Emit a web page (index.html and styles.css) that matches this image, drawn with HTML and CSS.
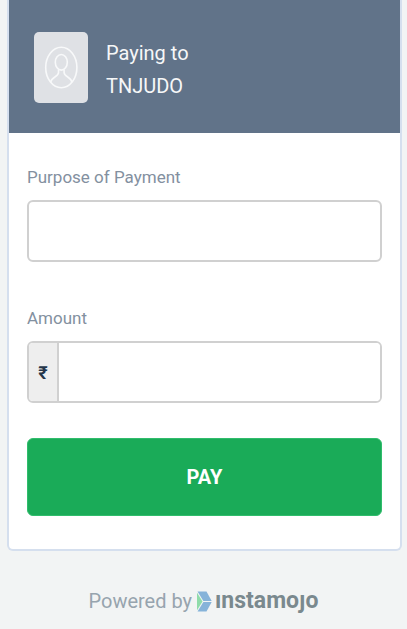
FILE: index.html
```
<!DOCTYPE html>
<html lang="en">
<head>
<meta charset="utf-8">
<meta name="viewport" content="width=device-width, initial-scale=1">
<title>Paying to TNJUDO</title>
<link rel="stylesheet" href="styles.css">
</head>
<body>
<main class="card">
  <header class="payee">
    <svg class="avatar" viewBox="0 0 54 71" aria-hidden="true">
      <rect width="54" height="71" rx="5" fill="#dfe1e5"/>
      <g fill="none" stroke="#f8f9fa" stroke-width="1.6">
        <ellipse cx="27.3" cy="35.5" rx="15.600" ry="20.2"/>
        <ellipse cx="27.3" cy="30.3" rx="6" ry="7.800"/>
        <path d="M24.500 37.500v3c0 2-1.400 3-3.300 4.200-2.300 1.500-4 2.800-4.500 5.300M30.100 37.500v3c0 2 1.400 3 3.300 4.200 2.300 1.500 4 2.800 4.500 5.300"/>
      </g>
    </svg>
    <h1 class="payee-name">Paying to<br>TNJUDO</h1>
  </header>
  <form class="form">
    <label class="label" for="purpose">Purpose of Payment</label>
    <input class="field" id="purpose" type="text">
    <label class="label" for="amount">Amount</label>
    <div class="field group">
      <span class="currency">₹</span>
      <input class="amount" id="amount" type="text" inputmode="decimal">
    </div>
    <button class="pay" type="button">PAY</button>
  </form>
</main>
<footer class="footer">
  <span>Powered by</span>
  <a class="brand" href="#">
    <svg class="mark" viewBox="0 0 15 21" aria-hidden="true">
      <path d="M0.500 0.500h9L14.700 9.900H6.400z" fill="#86b3d9"/>
      <path d="M0.500 20.500h9L14.700 11.100H6.400z" fill="#86b3d9"/>
      <path d="M0 1.800L5.500 10.500 0 19.200z" fill="#8fdcaa"/>
    </svg>
    <span>ınstamoȷo</span>
  </a>
</footer>
</body>
</html>
```
FILE: styles.css
```
* {
  box-sizing: border-box;
}

body {
  margin: 0;
  background: #f2f4f4;
  font-family: Roboto, "Liberation Sans", sans-serif;
}

.card {
  margin: 0 5px 0 7px;
  background: #fff;
  border: 2px solid #d5dfee;
  border-top: 0;
  border-radius: 0 0 6px 6px;
}

.payee {
  display: flex;
  align-items: center;
  gap: 18px;
  padding: 32px 25px 30px;
  background: #617389;
}

.avatar {
  width: 54px;
  height: 71px;
}

.payee-name {
  margin: 0;
  padding-top: 4px;
  color: #f6f7f8;
  font-size: 20px;
  font-weight: 400;
  line-height: 33px;
}

.form {
  display: flex;
  flex-direction: column;
  padding: 32px 18px 33px;
}

.label {
  margin-bottom: 11px;
  color: #8390a0;
  font-size: 17px;
  line-height: 24px;
}

.field {
  width: 100%;
  height: 62px;
  margin: 0 0 44px;
  padding: 0 12px;
  border: 2px solid #d0d0d0;
  border-radius: 6px;
  background: #fff;
  color: #25364a;
  font: inherit;
  font-size: 18px;
}

.group {
  display: flex;
  margin-bottom: 35px;
  padding: 0;
  overflow: hidden;
}

.currency {
  display: flex;
  align-items: center;
  justify-content: center;
  width: 30px;
  border-right: 2px solid #d0d0d0;
  background: #eee;
  font-weight: 700;
}

.amount {
  flex: 1;
  min-width: 0;
  padding: 0 12px;
  border: 0;
  background: #fff;
  color: inherit;
  font: inherit;
}

.pay {
  height: 78px;
  border: 1px solid #30bd6c;
  border-radius: 6px;
  background: #1aab58;
  color: #fff;
  font: inherit;
  font-size: 20px;
  font-weight: 700;
}

.footer {
  display: flex;
  align-items: center;
  justify-content: center;
  gap: 5px;
  padding: 34px 0 10px;
  color: #97a4ae;
  font-size: 20px;
  line-height: 32px;
}

.brand {
  display: flex;
  align-items: center;
  gap: 3px;
  color: #7a898e;
  font-size: 23px;
  font-weight: 700;
  text-decoration: none;
}

.mark {
  width: 15px;
  height: 21px;
}
```
